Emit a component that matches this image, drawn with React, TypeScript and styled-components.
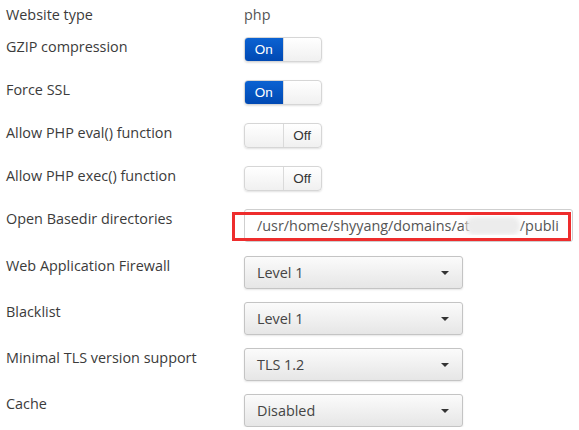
import React from "react";
import styled, { createGlobalStyle } from "styled-components";

const GlobalStyle = createGlobalStyle`
  html, body {
    margin: 0;
    padding: 0;
    background: #ffffff;
  }
  body {
    font-family: "Open Sans", "Liberation Sans", sans-serif;
    font-size: 14.4px;
    color: #3b3b3b;
  }
`;

type Control =
  | { kind: "text"; value: string }
  | { kind: "toggle"; on: boolean }
  | { kind: "path" }
  | { kind: "select"; value: string };

interface Setting {
  label: string;
  control: Control;
  space: number;
}

const settings: Setting[] = [
  { label: "Website type", control: { kind: "text", value: "php" }, space: 12 },
  { label: "GZIP compression", control: { kind: "toggle", on: true }, space: 18 },
  { label: "Force SSL", control: { kind: "toggle", on: true }, space: 18 },
  { label: "Allow PHP eval() function", control: { kind: "toggle", on: false }, space: 18 },
  { label: "Allow PHP exec() function", control: { kind: "toggle", on: false }, space: 18 },
  { label: "Open Basedir directories", control: { kind: "path" }, space: 14 },
  { label: "Web Application Firewall", control: { kind: "select", value: "Level 1" }, space: 13 },
  { label: "Blacklist", control: { kind: "select", value: "Level 1" }, space: 13 },
  { label: "Minimal TLS version support", control: { kind: "select", value: "TLS 1.2" }, space: 13 },
  { label: "Cache", control: { kind: "select", value: "Disabled" }, space: 0 },
];

const renderControl = (control: Control) => {
  switch (control.kind) {
    case "text":
      return <Value>{control.value}</Value>;
    case "toggle":
      return (
        <Toggle>
          <ToggleHalf $active={control.on}>{control.on ? "On" : ""}</ToggleHalf>
          <ToggleHalf $active={false} $right>
            {control.on ? "" : "Off"}
          </ToggleHalf>
        </Toggle>
      );
    case "path":
      return (
        <PathField>
          <PathText>
            /usr/home/shyyang/domains/at
            <Redacted />
            /publi
          </PathText>
          <Highlight />
        </PathField>
      );
    case "select":
      return (
        <Select>
          <span>{control.value}</span>
          <Caret />
        </Select>
      );
  }
};

const App = () => {
  return (
    <>
      <GlobalStyle />
      <Form>
        {settings.map((s) => (
          <Row key={s.label} $space={s.space}>
            <Label>{s.label}</Label>
            {renderControl(s.control)}
          </Row>
        ))}
      </Form>
    </>
  );
};

export default App;

const Form = styled.div`
  padding: 5px 0 0 6px;
  display: flex;
  flex-direction: column;
`;

const Row = styled.div<{ $space: number }>`
  display: grid;
  grid-template-columns: 238px auto;
  align-items: start;
  padding-bottom: ${({ $space }) => $space}px;
`;

const Label = styled.div`
  line-height: 20px;
  color: #3b3b3b;
`;

const Value = styled.div`
  line-height: 20px;
  color: #555;
`;

const Toggle = styled.div`
  width: 78px;
  height: 25px;
  box-sizing: border-box;
  display: flex;
  border: 1px solid #d6d6d6;
  border-radius: 4px;
  overflow: hidden;
  box-shadow: 0 1px 2px rgba(0, 0, 0, 0.12);
  background: linear-gradient(#ffffff, #f0f0f0);
`;

const ToggleHalf = styled.div<{ $active: boolean; $right?: boolean }>`
  width: 50%;
  display: flex;
  align-items: center;
  justify-content: center;
  font-family: "Liberation Sans", Arial, sans-serif;
  font-size: 13.5px;
  color: ${({ $active }) => ($active ? "#ffffff" : "#333")};
  background: ${({ $active }) =>
    $active ? "linear-gradient(#0b62d2, #0049b3)" : "transparent"};
  border-left: ${({ $right }) => ($right ? "1px solid #dadada" : "none")};
`;

const PathField = styled.div`
  position: relative;
  width: 329px;
  height: 33px;
  box-sizing: border-box;
  border: 1px solid #cfcfcf;
  border-radius: 3px;
  padding: 0 11px 0 12px;
  display: flex;
  align-items: center;
  color: #555;
`;

const PathText = styled.div`
  white-space: nowrap;
  overflow: hidden;
  display: flex;
  align-items: center;
`;

const Redacted = styled.span`
  display: inline-block;
  width: 54px;
  height: 18px;
  margin-left: -4px;
  background: #ececec;
  border-radius: 8px;
  filter: blur(2px);
`;

const Highlight = styled.div`
  position: absolute;
  left: -13px;
  top: 2px;
  width: 339px;
  height: 29px;
  box-sizing: border-box;
  border: 3px solid #ee2d2d;
  pointer-events: none;
`;

const Select = styled.div`
  width: 219px;
  height: 33px;
  box-sizing: border-box;
  border: 1px solid #c4c4c4;
  border-radius: 3px;
  padding: 0 13px 0 12px;
  display: flex;
  align-items: center;
  justify-content: space-between;
  color: #444;
  background: linear-gradient(#fbfbfb, #e6e6e6);
  box-shadow: 0 1px 2px rgba(0, 0, 0, 0.1);
`;

const Caret = styled.span`
  width: 0;
  height: 0;
  border-left: 4px solid transparent;
  border-right: 4px solid transparent;
  border-top: 4px solid #333;
`;
